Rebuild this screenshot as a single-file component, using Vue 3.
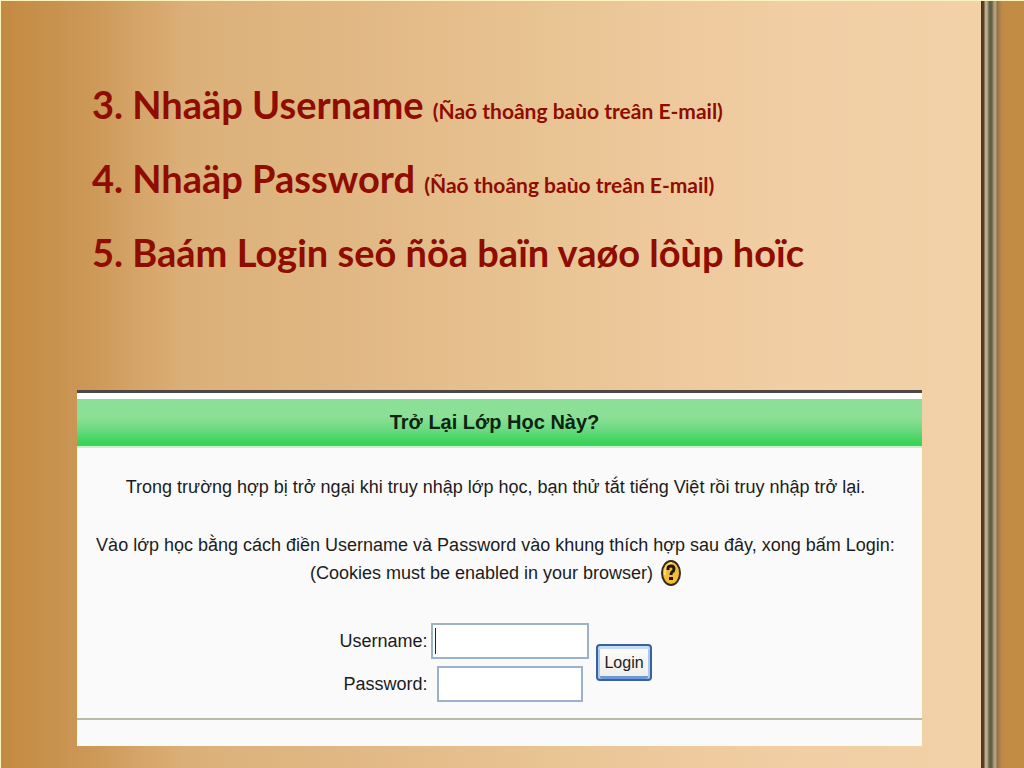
<script setup>
import { ref } from 'vue'

const username = ref('')
const password = ref('')
const steps = [
  { text: '3. Nhaäp Username', note: '(Ñaõ thoâng baùo treân E-mail)' },
  { text: '4. Nhaäp Password', note: '(Ñaõ thoâng baùo treân E-mail)' },
  { text: '5. Baám Login seõ ñöa baïn vaøo lôùp hoïc', note: '' },
]
</script>

<template>
  <main class="slide">
    <div class="content">
      <div class="steps">
        <p v-for="step in steps" :key="step.text" class="step">
          {{ step.text }} <small v-if="step.note">{{ step.note }}</small>
        </p>
      </div>

      <section class="card">
        <h1 class="title">Trở Lại Lớp Học Này?</h1>
        <div class="body">
          <p class="line">Trong trường hợp bị trở ngại khi truy nhập lớp học, bạn thử tắt tiếng Việt rồi truy nhập trở lại.</p>
          <p class="line intro">Vào lớp học bằng cách điền Username và Password vào khung thích hợp sau đây, xong bấm Login:</p>
          <p class="line cookies">
            <span>(Cookies must be enabled in your browser)</span>
            <button class="help" type="button" aria-label="Help">
              <svg viewBox="0 0 20 26" width="20" height="26" aria-hidden="true">
                <ellipse cx="10" cy="13" rx="9" ry="12" fill="#f3bd35" stroke="#33291f" stroke-width="2" />
                <path d="M4 15C3 9 6 4 11 3" fill="none" stroke="#ffe06a" stroke-width="2" />
                <path d="M7 10V8Q7 6 10 6Q13 6 13 9Q13 11 11 12Q10 13 10 15" fill="none" stroke="#1d1710" stroke-width="3" />
                <path d="M8 17H12V20H8Z" fill="#1d1710" />
              </svg>
            </button>
          </p>
          <form class="login" @submit.prevent>
            <div class="fields">
              <label for="username">Username:</label>
              <input id="username" v-model="username" class="active" type="text" />
              <label for="password">Password:</label>
              <input id="password" v-model="password" class="short" type="password" />
            </div>
            <button class="submit" type="submit">Login</button>
          </form>
        </div>
        <div class="foot"></div>
      </section>
    </div>
    <div class="binding"></div>
  </main>
</template>

<style>
body {
  margin: 0;
}
</style>

<style scoped>
.slide {
  box-sizing: border-box;
  display: flex;
  min-height: 100vh;
  border-top: 1px solid #fbf3bd;
  border-left: 1px solid #fbf3bd;
  background: linear-gradient(90deg, #c38b40 0, #c58d46 2%, #c99350 6%, #ce9b5a 10%, #d6a66a 14%, #dbaf78 18%, #deb47e 26%, #e2ba87 38%, #e8c392 52%, #eec99d 66%, #f1cea4 78%, #f3d2a9 100%);
}
.content {
  flex: 1;
  min-width: 0;
  padding: 66px 59px 20px 76px;
}
.steps {
  padding-left: 15px;
  min-height: 323px;
}
.step {
  margin: 0;
  color: #8f0c00;
  font: bold 38px/74px Lato, "Open Sans", sans-serif;
}
.step small {
  font-size: 21px;
  line-height: 1;
}
.card {
  border-top: 3px solid #4b4848;
  background: #fafafa;
  color: #1c1c1c;
  font: 18px/28px "Liberation Sans", sans-serif;
}
.title {
  margin: 0;
  padding-right: 10px;
  border-top: 6px solid #fff;
  border-bottom: 2px solid #c9efcf;
  background: linear-gradient(#8bdf96 0 40%, #6bd980 65%, #3cd457 92%, #3ad364);
  color: #0c2410;
  font-size: 20px;
  line-height: 47px;
  text-align: center;
}
.body {
  padding: 25px 8px 16px 0;
  border-bottom: 2px solid #b9bba8;
}
.line {
  margin: 0;
  text-align: center;
}
.intro {
  margin-top: 30px;
}
.cookies {
  display: flex;
  justify-content: center;
  align-items: center;
  gap: 8px;
}
.help {
  display: flex;
  padding: 0;
  border: 0;
  background: none;
}
.login {
  display: flex;
  justify-content: center;
  align-items: center;
  gap: 7px;
  margin-top: 36px;
}
.fields {
  display: grid;
  grid-template-columns: auto 158px;
  align-items: center;
  gap: 7px 4px;
}
.fields label {
  text-align: right;
}
.fields input {
  box-sizing: border-box;
  width: 158px;
  height: 36px;
  padding: 2px 3px;
  border: 2px solid #9bb2ca;
  outline: none;
  background: #fff;
  font: inherit;
}
.fields .active {
  background: linear-gradient(#222, #222) 2px center / 1px 26px no-repeat #fff;
}
.fields .short {
  width: 146px;
  justify-self: center;
}
.submit {
  height: 37px;
  padding: 0 6px;
  border: 2px solid #3a6299;
  border-radius: 4px;
  background: linear-gradient(#fcfcfb, #eeede8);
  box-shadow: inset 0 3px #c4dcfa, inset 2px 0 #a9c8f4, inset -2px 0 #a9c8f4, inset 0 -3px #6d98e0;
  color: #1c1c1c;
  font: inherit;
  font-size: 16px;
}
.foot {
  height: 26px;
}
.binding {
  width: 43px;
  background: linear-gradient(90deg, #4a341c 0, #5a4329 3px, #b7a684 4px, #c2b394 6px, #8c8468 7px, #5d5a42 9px, #68644b 11px, #b09f7c 13px, #b5a17e 15px, #8b7249 16px, #a57d4b 18px, #bd8a4b 21px, #c38c44 24px);
}
</style>
